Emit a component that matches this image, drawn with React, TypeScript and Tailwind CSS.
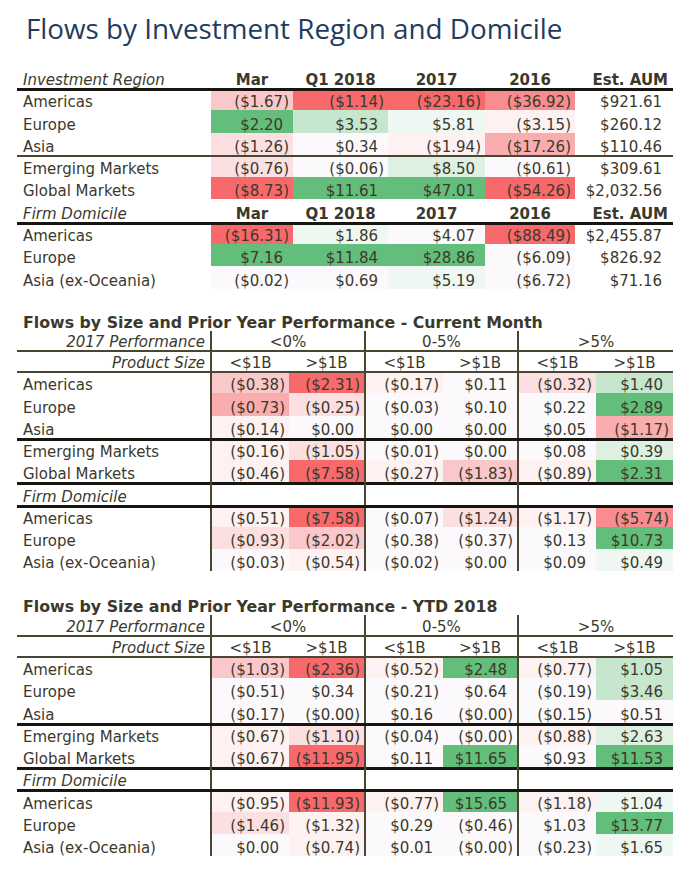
import React from 'react'

type Cell = [string, string]
type Row = { label: string; cells?: Cell[]; head?: boolean; line?: 'thin' | 'thick' }

const shade: Record<string, string> = {
  p0: 'bg-[#fdf1f2]',
  p1: 'bg-[#fbdfe1]',
  p2: 'bg-[#fac8ca]',
  p3: 'bg-[#f9adaf]',
  p4: 'bg-[#f88c8e]',
  p5: 'bg-[#f8696b]',
  w: 'bg-[#fbf9fb]',
  q0: 'bg-[#eef7f1]',
  q1: 'bg-[#ddf0e2]',
  q2: 'bg-[#c6e6ce]',
  q3: 'bg-[#a2d6b0]',
  q4: 'bg-[#82c995]',
  q5: 'bg-[#63be7b]',
  '': '',
}

// lines sit on the row boundary and overlap the next row, like Excel borders
const lineCls = {
  thin: 'relative z-10 box-content border-b-2 -mb-[2px] border-[#4a4634]',
  thick: 'relative z-10 box-content border-b-[3px] -mb-[3px] border-[#16150f]',
}

const cols1 = ['Mar', 'Q1 2018', '2017', '2016', 'Est. AUM']

const table1: Row[] = [
  { label: 'Investment Region', head: true, line: 'thick' },
  { label: 'Americas', cells: [['($1.67)', 'p2'], ['($1.14)', 'p5'], ['($23.16)', 'p5'], ['($36.92)', 'p4'], ['$921.61', '']] },
  { label: 'Europe', cells: [['$2.20', 'q5'], ['$3.53', 'q2'], ['$5.81', 'q0'], ['($3.15)', 'p0'], ['$260.12', '']] },
  { label: 'Asia', cells: [['($1.26)', 'p1'], ['$0.34', 'w'], ['($1.94)', 'p0'], ['($17.26)', 'p3'], ['$110.46', '']], line: 'thin' },
  { label: 'Emerging Markets', cells: [['($0.76)', 'p1'], ['($0.06)', 'w'], ['$8.50', 'q1'], ['($0.61)', 'w'], ['$309.61', '']] },
  { label: 'Global Markets', cells: [['($8.73)', 'p5'], ['$11.61', 'q5'], ['$47.01', 'q5'], ['($54.26)', 'p5'], ['$2,032.56', '']] },
  { label: 'Firm Domicile', head: true, line: 'thick' },
  { label: 'Americas', cells: [['($16.31)', 'p5'], ['$1.86', 'q0'], ['$4.07', 'w'], ['($88.49)', 'p5'], ['$2,455.87', '']] },
  { label: 'Europe', cells: [['$7.16', 'q5'], ['$11.84', 'q5'], ['$28.86', 'q5'], ['($6.09)', 'w'], ['$826.92', '']] },
  { label: 'Asia (ex-Oceania)', cells: [['($0.02)', 'w'], ['$0.69', 'w'], ['$5.19', 'q0'], ['($6.72)', 'w'], ['$71.16', '']] },
]

const month: Row[] = [
  { label: 'Americas', cells: [['($0.38)', 'p2'], ['($2.31)', 'p5'], ['($0.17)', 'p0'], ['$0.11', 'w'], ['($0.32)', 'p1'], ['$1.40', 'q2']] },
  { label: 'Europe', cells: [['($0.73)', 'p3'], ['($0.25)', 'p1'], ['($0.03)', 'w'], ['$0.10', 'w'], ['$0.22', 'w'], ['$2.89', 'q5']] },
  { label: 'Asia', cells: [['($0.14)', 'p0'], ['$0.00', 'w'], ['$0.00', 'w'], ['$0.00', 'w'], ['$0.05', 'w'], ['($1.17)', 'p3']], line: 'thick' },
  { label: 'Emerging Markets', cells: [['($0.16)', 'p0'], ['($1.05)', 'p1'], ['($0.01)', 'w'], ['$0.00', 'w'], ['$0.08', 'w'], ['$0.39', 'q1']] },
  { label: 'Global Markets', cells: [['($0.46)', 'p0'], ['($7.58)', 'p5'], ['($0.27)', 'p0'], ['($1.83)', 'p2'], ['($0.89)', 'p0'], ['$2.31', 'q5']], line: 'thick' },
  { label: 'Firm Domicile', head: true, line: 'thick' },
  { label: 'Americas', cells: [['($0.51)', 'p0'], ['($7.58)', 'p5'], ['($0.07)', 'w'], ['($1.24)', 'p1'], ['($1.17)', 'p0'], ['($5.74)', 'p4']] },
  { label: 'Europe', cells: [['($0.93)', 'p1'], ['($2.02)', 'p2'], ['($0.38)', 'w'], ['($0.37)', 'w'], ['$0.13', 'w'], ['$10.73', 'q5']] },
  { label: 'Asia (ex-Oceania)', cells: [['($0.03)', 'w'], ['($0.54)', 'p0'], ['($0.02)', 'w'], ['$0.00', 'w'], ['$0.09', 'w'], ['$0.49', 'q0']] },
]

const ytd: Row[] = [
  { label: 'Americas', cells: [['($1.03)', 'p2'], ['($2.36)', 'p5'], ['($0.52)', 'p0'], ['$2.48', 'q5'], ['($0.77)', 'p0'], ['$1.05', 'q2']] },
  { label: 'Europe', cells: [['($0.51)', 'w'], ['$0.34', 'w'], ['($0.21)', 'w'], ['$0.64', 'w'], ['($0.19)', 'w'], ['$3.46', 'q2']] },
  { label: 'Asia', cells: [['($0.17)', 'w'], ['($0.00)', 'w'], ['$0.16', 'w'], ['($0.00)', 'w'], ['($0.15)', 'w'], ['$0.51', 'w']], line: 'thick' },
  { label: 'Emerging Markets', cells: [['($0.67)', 'p0'], ['($1.10)', 'p1'], ['($0.04)', 'w'], ['($0.00)', 'w'], ['($0.88)', 'p0'], ['$2.63', 'q1']] },
  { label: 'Global Markets', cells: [['($0.67)', 'p0'], ['($11.95)', 'p5'], ['$0.11', 'w'], ['$11.65', 'q5'], ['$0.93', 'w'], ['$11.53', 'q5']], line: 'thick' },
  { label: 'Firm Domicile', head: true, line: 'thick' },
  { label: 'Americas', cells: [['($0.95)', 'p0'], ['($11.93)', 'p5'], ['($0.77)', 'p0'], ['$15.65', 'q5'], ['($1.18)', 'p0'], ['$1.04', 'q0']] },
  { label: 'Europe', cells: [['($1.46)', 'p1'], ['($1.32)', 'p0'], ['$0.29', 'w'], ['($0.46)', 'w'], ['$1.03', 'w'], ['$13.77', 'q5']] },
  { label: 'Asia (ex-Oceania)', cells: [['$0.00', 'w'], ['($0.74)', 'p0'], ['$0.01', 'w'], ['($0.00)', 'w'], ['($0.23)', 'w'], ['$1.65', 'q0']] },
]

function Amount({ v }: { v: string }) {
  const neg = v.startsWith('(')
  return (
    <span className="whitespace-nowrap">
      {v}
      {!neg && <span className="invisible">)</span>}
    </span>
  )
}

const grid1 = 'grid grid-cols-[194px_82px_95px_97px_90px_98px]'
const grid2 = 'grid grid-cols-[195px_77px_77px_77px_76px_77px_77px]'
const vline = 'border-r-2 border-[#4a4634]'

function RegionTable() {
  return (
    <div className="mt-[23px]">
      {table1.map((r, i) => (
        <div
          key={i}
          className={`${grid1} ${i === 0 ? 'h-[20px]' : 'h-[22.3px]'} ${r.line ? lineCls[r.line] : ''}`}
        >
          <div className={`flex items-end pl-[6px] ${r.head ? 'italic' : ''}`}>{r.label}</div>
          {r.head
            ? cols1.map((c, j) => (
                <div
                  key={j}
                  className={`flex items-end font-bold ${j === 4 ? 'justify-end pr-[5px]' : 'justify-center'}`}
                >
                  {c}
                </div>
              ))
            : r.cells!.map(([v, s], j) => (
                <div key={j} className={`flex items-end justify-end ${j === 4 ? 'pr-[5px]' : 'pr-[4px]'} ${shade[s]}`}>
                  <Amount v={v} />
                </div>
              ))}
        </div>
      ))}
    </div>
  )
}

function SizeTable({ title, rows, className }: { title: string; rows: Row[]; className: string }) {
  return (
    <div className={className}>
      <div className="h-[24px] flex items-end pl-[6px] text-[15.8px] leading-[16px] font-bold">{title}</div>
      <div className={`${grid2} h-[19.5px] ${lineCls.thin}`}>
        <div className={`flex items-end justify-end pr-[5px] italic ${vline}`}>2017 Performance</div>
        <div className={`col-span-2 flex items-end justify-center ${vline}`}>&lt;0%</div>
        <div className={`col-span-2 flex items-end justify-center ${vline}`}>0-5%</div>
        <div className="col-span-2 flex items-end justify-center">&gt;5%</div>
      </div>
      <div className={`${grid2} h-[21px] ${lineCls.thin}`}>
        <div className={`flex items-end justify-end pr-[5px] italic ${vline}`}>Product Size</div>
        {['<$1B', '>$1B', '<$1B', '>$1B', '<$1B', '>$1B'].map((c, j) => (
          <div key={j} className={`flex items-end justify-center ${j === 1 || j === 3 ? vline : ''}`}>
            {c}
          </div>
        ))}
      </div>
      {rows.map((r, i) => (
        <div key={i} className={`${grid2} h-[22.25px] ${r.line ? lineCls[r.line] : ''}`}>
          <div className={`flex items-end pl-[6px] ${r.head ? 'italic' : ''} ${vline}`}>{r.label}</div>
          {r.head
            ? [0, 1, 2, 3, 4, 5].map((j) => <div key={j} className={j === 1 || j === 3 ? vline : ''} />)
            : r.cells!.map(([v, s], j) => (
                <div
                  key={j}
                  className={`flex items-end justify-end pr-[4px] ${shade[s]} ${j === 1 || j === 3 ? vline : ''}`}
                >
                  <Amount v={v} />
                </div>
              ))}
        </div>
      ))}
    </div>
  )
}

export default function App() {
  return (
    <div className="min-h-[879px] w-[690px] bg-white pt-[11px] pl-[17px]">
      <h1 className="h-[34px] pl-[9px] font-['Open_Sans',sans-serif] text-[27.8px] leading-[34px] text-[#1f3c5e]">
        Flows by Investment Region and Domicile
      </h1>
      <div className="w-[656px] font-['DejaVu_Sans',sans-serif] text-[15px] leading-[15px] text-[#3b392c]">
        <RegionTable />
        <SizeTable
          className="mt-[18px]"
          title="Flows by Size and Prior Year Performance - Current Month"
          rows={month}
        />
        <SizeTable className="mt-[20px]" title="Flows by Size and Prior Year Performance - YTD 2018" rows={ytd} />
      </div>
    </div>
  )
}
